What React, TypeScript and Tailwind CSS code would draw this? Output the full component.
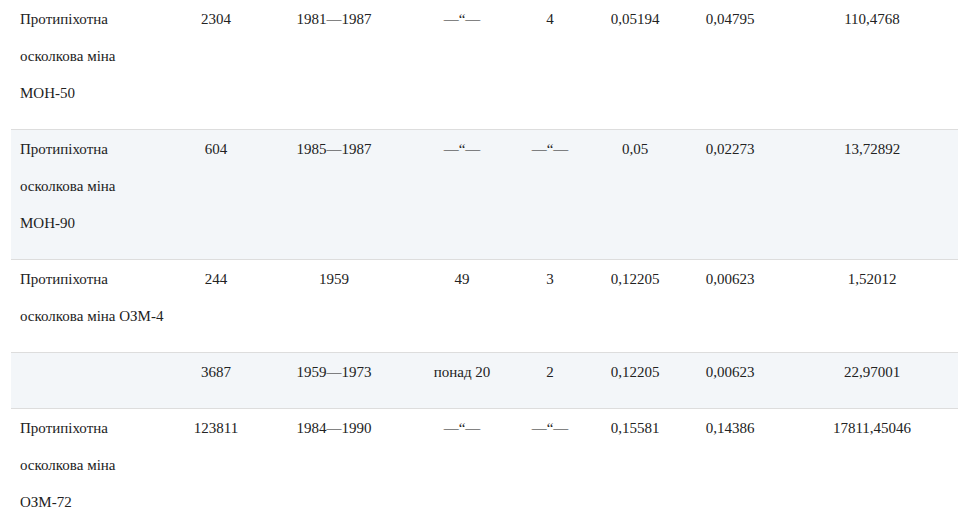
type Row = {
  name: string;
  cells: string[];
};

const rows: Row[] = [
  {
    name: "Протипіхотна осколкова міна МОН-50",
    cells: ["2304", "1981—1987", "—“—", "4", "0,05194", "0,04795", "110,4768"],
  },
  {
    name: "Протипіхотна осколкова міна МОН-90",
    cells: ["604", "1985—1987", "—“—", "—“—", "0,05", "0,02273", "13,72892"],
  },
  {
    name: "Протипіхотна осколкова міна ОЗМ-4",
    cells: ["244", "1959", "49", "3", "0,12205", "0,00623", "1,52012"],
  },
  {
    name: "",
    cells: ["3687", "1959—1973", "понад 20", "2", "0,12205", "0,00623", "22,97001"],
  },
  {
    name: "Протипіхотна осколкова міна ОЗМ-72",
    cells: ["123811", "1984—1990", "—“—", "—“—", "0,15581", "0,14386", "17811,45046"],
  },
];

const widths = ["w-[165px]", "w-[80px]", "w-[156px]", "w-[100px]", "w-[76px]", "w-[94px]", "w-[96px]", "w-[188px]"];

export default function App() {
  return (
    <div
      className="w-[958px] h-[530px] overflow-hidden bg-white text-[#222222] text-[15px] leading-[37px]"
      style={{ fontFamily: '"Liberation Serif", "Times New Roman", serif' }}
    >
      <table className="ml-[11px] w-[955px] table-fixed border-collapse">
        <colgroup>
          {widths.map((w, i) => (
            <col key={i} className={w} />
          ))}
        </colgroup>
        <tbody>
          {rows.map((row, i) => (
            <tr
              key={i}
              className={`border-b border-[#dddddd] ${i % 2 === 1 ? "bg-[#f3f6f9]" : "bg-white"}`}
            >
              <td className="h-[56px] align-top px-[9px] pt-px pb-[17px] text-left">{row.name}</td>
              {row.cells.map((c, j) => (
                <td key={j} className="h-[56px] align-top px-[9px] pt-px pb-[17px] text-center whitespace-nowrap">
                  {c}
                </td>
              ))}
            </tr>
          ))}
        </tbody>
      </table>
    </div>
  );
}
